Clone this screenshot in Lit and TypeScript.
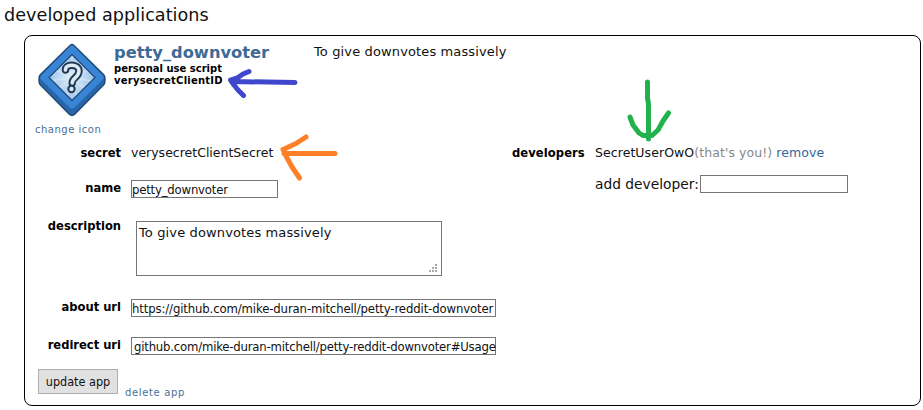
import { LitElement, html, css, svg } from "lit";
import { customElement, property } from "lit/decorators.js";

@customElement("app-icon")
class AppIcon extends LitElement {
  static styles = css`
    :host { display: block; width: 70px; height: 74px; }
    svg { display: block; }
  `;
  render() {
    const rays = [10, 42, 78, 105, 140, 172, 205, 238, 270, 305, 335];
    const hook = "M27.500 27C27 20.500 41 20.500 41 28C41 34.500 34 34.500 34.200 40";
    return html`<svg width="70" height="74" viewBox="0 0 70 74">
      <defs>
        <radialGradient id="core"><stop offset="0" stop-color="#e2effa" /><stop offset="1" stop-color="#9dc4ea" /></radialGradient>
        <clipPath id="inner"><path d="M34 11.500 57 34.500 34 57.500 11 34.500Z" /></clipPath>
      </defs>
      <path d="M32.500 2Q34 .8 35.500 2L65.500 31.500Q67 33 67 35V38.500Q67 40.500 65.500 42L36.500 71.500Q34 73.500 31.500 71.500L2.500 42Q1 40.500 1 38.500V35Q1 33 2.500 31.500Z" fill="#2766aa" stroke="#1f4772" stroke-width="1.300" />
      <path d="M32.800 2.800Q34 1.800 35.200 2.800L64.800 32.500Q66.300 34.500 64.800 36.500L36.500 64.500Q34 66.500 31.500 64.500L3.200 36.500Q1.700 34.500 3.200 32.500Z" fill="#3885d6" />
      <path d="M34 11.500 57 34.500 34 57.500 11 34.500Z" fill="url(#core)" />
      <g clip-path="url(#inner)" stroke="#d8e9f8" stroke-width="2" opacity=".55">
        ${rays.map((a) => svg`<path d="M34 34.500h25" transform="rotate(${a} 34 34.500)" />`)}
      </g>
      <path d="M34 11.500 57 34.500 34 57.500 11 34.500Z" fill="none" stroke="#204c7c" stroke-width="1.300" />
      <path d="${hook}" fill="none" stroke="#20384f" stroke-width="7.400" stroke-linecap="round" />
      <circle cx="33.500" cy="46" r="4.200" fill="#20384f" />
      <path d="${hook}" fill="none" stroke="#dceaf6" stroke-width="3.600" stroke-linecap="round" />
      <circle cx="33.500" cy="46" r="2.200" fill="#dceaf6" />
    </svg>`;
  }
}

@customElement("text-box")
class TextBox extends LitElement {
  @property() value = "";
  static styles = css`
    :host {
      display: block; box-sizing: border-box; width: 147px; height: 18px;
      border: 1px solid #767676; background: #fff; color: #111; padding: 0;
      font: 13px/18px "DejaVu Sans Condensed", "DejaVu Sans", sans-serif;
      font-stretch: 90%; letter-spacing: -0.2px; white-space: nowrap;
    }
  `;
  render() {
    return html`<span>${this.value}</span>`;
  }
}

@customElement("app-root")
class AppRoot extends LitElement {
  static styles = css`
    :host {
      display: block; position: relative; width: 923px; height: 410px; overflow: hidden;
      background: #fff; color: #111; font: 12.5px/20px "DejaVu Sans", Verdana, sans-serif; white-space: nowrap;
    }
    h1 { margin: 0; height: 35px; box-sizing: border-box; padding: 4px 0 0 4px; font-weight: 400; font-size: 17.6px; letter-spacing: .04px; line-height: 22px; color: #111; }
    .card { box-sizing: border-box; margin-left: 24px; width: 897px; height: 371px; border: 1px solid #000; border-radius: 8px; }
    .head { display: flex; height: 107px; }
    .pic { width: 89px; padding: 7px 0 0 13px; box-sizing: border-box; }
    a { color: #369; text-decoration: none; }
    .small { display: block; font-size: 10px; letter-spacing: .5px; line-height: 14px; color: #4a7096; }
    .pic .small { margin: 6px 0 0 -3px; }
    .info { width: 200px; padding-top: 7px; box-sizing: border-box; font-weight: 700; font-size: 10px; line-height: 12px; color: #000; }
    .info h2 { margin: 0; font-size: 16.3px; line-height: 20px; color: #3d6a97; height: 20px; }
    .cid { letter-spacing: .22px; }
    .about { padding-top: 6px; font-size: 13px; letter-spacing: .13px; }
    .body { display: flex; }
    .left { width: 487px; display: grid; grid-template-columns: 96px 1fr; column-gap: 10px; grid-template-rows: 35px 38px 81px 38px 34px; }
    .label { text-align: right; font: 700 12.8px/20px "DejaVu Sans Condensed", "DejaVu Sans", sans-serif; font-stretch: 90%; color: #000; }
    text-box { margin-top: 2px; }
    .wide { width: 365px; letter-spacing: -.13px; }
    .tail { padding-left: 2px; letter-spacing: -.2px; }
    .area { position: relative; box-sizing: border-box; margin: 5px 0 0 5px; width: 306px; height: 55px; border: 1px solid #767676; padding: 1px 2px; font-size: 13px; letter-spacing: .13px; }
    .grip { position: absolute; right: 3px; bottom: 2px; }
    .right { display: grid; grid-template-columns: 73px 1fr; column-gap: 10px; grid-template-rows: 31px 20px; }
    .right .label { text-align: left; letter-spacing: .1px; }
    .dev { letter-spacing: .07px; }
    .you { color: #888; }
    .add { grid-column: 2; display: flex; font-size: 13.8px; }
    .add text-box { margin: 1px 0 0 1px; width: 148px; }
    .foot { display: flex; margin-left: 13px; gap: 7px; }
    .button { box-sizing: border-box; width: 80px; height: 25px; border: 1px solid #adadad; background: #e1e1e1; text-align: center; font: 12.5px/23px "DejaVu Sans Condensed", "DejaVu Sans", sans-serif; font-stretch: 90%; color: #111; }
    .foot .small { margin-top: 17px; letter-spacing: .65px; }
    .marks { position: absolute; left: 0; top: 0; }
  `;
  render() {
    return html`
      <h1>developed applications</h1>
      <div class="card">
        <div class="head">
          <div class="pic"><app-icon></app-icon><a class="small">change icon</a></div>
          <div class="info"><h2>petty_downvoter</h2><div>personal use script</div><div class="cid">verysecretClientID</div></div>
          <div class="about">To give downvotes massively</div>
        </div>
        <div class="body">
          <div class="left">
            <div class="label">secret</div><div>verysecretClientSecret</div>
            <div class="label">name</div><text-box value="petty_downvoter"></text-box>
            <div class="label">description</div>
            <div class="area">To give downvotes massively
              <svg class="grip" width="9" height="9" fill="#aaa"><path d="M6 0h2v2h-2zM3 3h2v2h-2zM6 3h2v2h-2zM0 6h2v2h-2zM3 6h2v2h-2zM6 6h2v2h-2z" /></svg>
            </div>
            <div class="label">about url</div><text-box class="wide" value="https://github.com/mike-duran-mitchell/petty-reddit-downvoter"></text-box>
            <div class="label">redirect uri</div><text-box class="wide tail" value="github.com/mike-duran-mitchell/petty-reddit-downvoter#Usage"></text-box>
          </div>
          <div class="right">
            <div class="label">developers</div>
            <div class="dev">SecretUserOwO<span class="you">(that's you!)</span> <a>remove</a></div>
            <div class="add">add developer:<text-box></text-box></div>
          </div>
        </div>
        <div class="foot"><div class="button">update app</div><a class="small">delete app</a></div>
      </div>
      <svg class="marks" width="923" height="410" fill="none" stroke-linecap="round" stroke-linejoin="round" stroke-width="5">
        <path stroke="#3f48cc" d="M295 82.500 232 81.500M249 71.500 243 74 238 77.500 230.500 80 234 85 238 90 243.500 95.500" />
        <path stroke="#ff7f27" d="M335 153.500H284M306 137 296 143.500 283 149.500 286 156 292 167 299.500 178" />
        <path stroke="#22b14c" d="M647.500 82V98L648.500 104V139M630 117 633 125 639 133 643 135.500H652L658 130 663 121 668.500 113" />
      </svg>`;
  }
}
